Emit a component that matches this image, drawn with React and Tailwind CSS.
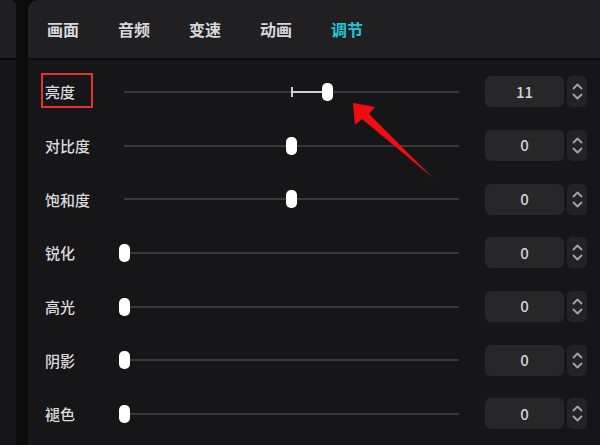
import React from 'react';

const tabs = ['画面', '音频', '变速', '动画', '调节'];

const rows = [
    { name: '亮度', value: 11, pos: 0.607, highlight: true },
    { name: '对比度', value: 0, pos: 0.5 },
    { name: '饱和度', value: 0, pos: 0.5 },
    { name: '锐化', value: 0, pos: 0 },
    { name: '高光', value: 0, pos: 0 },
    { name: '阴影', value: 0, pos: 0 },
    { name: '褪色', value: 0, pos: 0 },
];

const Stepper = () => (
    <div className="w-[20px] h-[31px] rounded-[5px] bg-[#232326] flex flex-col items-center justify-center gap-[3px]">
        <svg width="11" height="7" viewBox="0 0 11 7" fill="none">
            <path d="M1.5 5.5 L5.5 1.5 L9.5 5.5" stroke="#a4a4a8" strokeWidth="1.8" strokeLinecap="round" strokeLinejoin="round" />
        </svg>
        <svg width="11" height="7" viewBox="0 0 11 7" fill="none">
            <path d="M1.5 1.5 L5.5 5.5 L9.5 1.5" stroke="#a4a4a8" strokeWidth="1.8" strokeLinecap="round" strokeLinejoin="round" />
        </svg>
    </div>
);

const Slider = ({ pos }) => {
    const width = 335;
    const x = pos * width;
    const mid = width / 2;
    return (
        <div className="relative w-[335px] h-[20px] flex items-center">
            <div className="w-full h-[2px] bg-[#38383b]" />
            {pos > 0.5 && (
                <>
                    <div className="absolute h-[2px] bg-[#cfcfd1]" style={{ left: mid, width: x - mid }} />
                    <div className="absolute w-[2px] h-[10px] bg-[#cfcfd1]" style={{ left: mid - 1 }} />
                </>
            )}
            <div className="absolute w-[11px] h-[18px] rounded-[5px] bg-white" style={{ left: x - 5.5 }} />
        </div>
    );
};

export default function App() {
    return (
        <div
            className="w-[600px] h-[445px] overflow-hidden flex bg-[#0b0b0c] relative"
            style={{ fontFamily: '"Noto Sans CJK SC", "Noto Sans", sans-serif' }}
        >
            <div className="w-[16px] flex flex-col">
                <div className="h-[58px] bg-[#1f1f22] rounded-tr-[6px]" />
                <div className="h-[2px] bg-[#0b0b0c]" />
                <div className="flex-1 bg-[#161618]" />
            </div>
            <div className="w-[12px]" />
            <div className="flex-1 flex flex-col rounded-tl-[10px] overflow-hidden">
                <div className="h-[58px] bg-[#202023] flex items-center pl-[19px] gap-[39px] border-b-2 border-[#0d0d0e] box-content">
                    {tabs.map((t, i) => (
                        <span
                            key={t}
                            className={`text-[16px] leading-none font-bold ${i === 4 ? 'text-[#1ec8d6]' : 'text-[#d8d8da]'}`}
                        >
                            {t}
                        </span>
                    ))}
                </div>
                <div className="flex-1 bg-[#161618] pt-[5px] flex flex-col">
                    {rows.map((r) => (
                        <div key={r.name} className="h-[53.7px] shrink-0 flex items-center pl-[17px]">
                            <div className="w-[79px] relative">
                                <span className="block text-[15px] leading-none font-medium text-[#dadadc]">{r.name}</span>
                                {r.highlight && (
                                    <div className="absolute left-[-4px] top-[-11px] w-[52px] h-[35px] border-2 border-[#e3322f]" />
                                )}
                            </div>
                            <Slider pos={r.pos} />
                            <div className="ml-[26px] w-[79px] h-[31px] rounded-[6px] bg-[#27272a] flex items-center justify-center text-[15px] font-medium text-[#d4d4d6]">
                                {r.value}
                            </div>
                            <div className="ml-[3px]">
                                <Stepper />
                            </div>
                        </div>
                    ))}
                </div>
            </div>
            <svg className="absolute left-0 top-0 pointer-events-none" width="600" height="445">
                <path d="M353 103 L375 107 L369 114 L433 178 L362 119 L355 125 Z" fill="#f00d12" />
            </svg>
        </div>
    );
}
